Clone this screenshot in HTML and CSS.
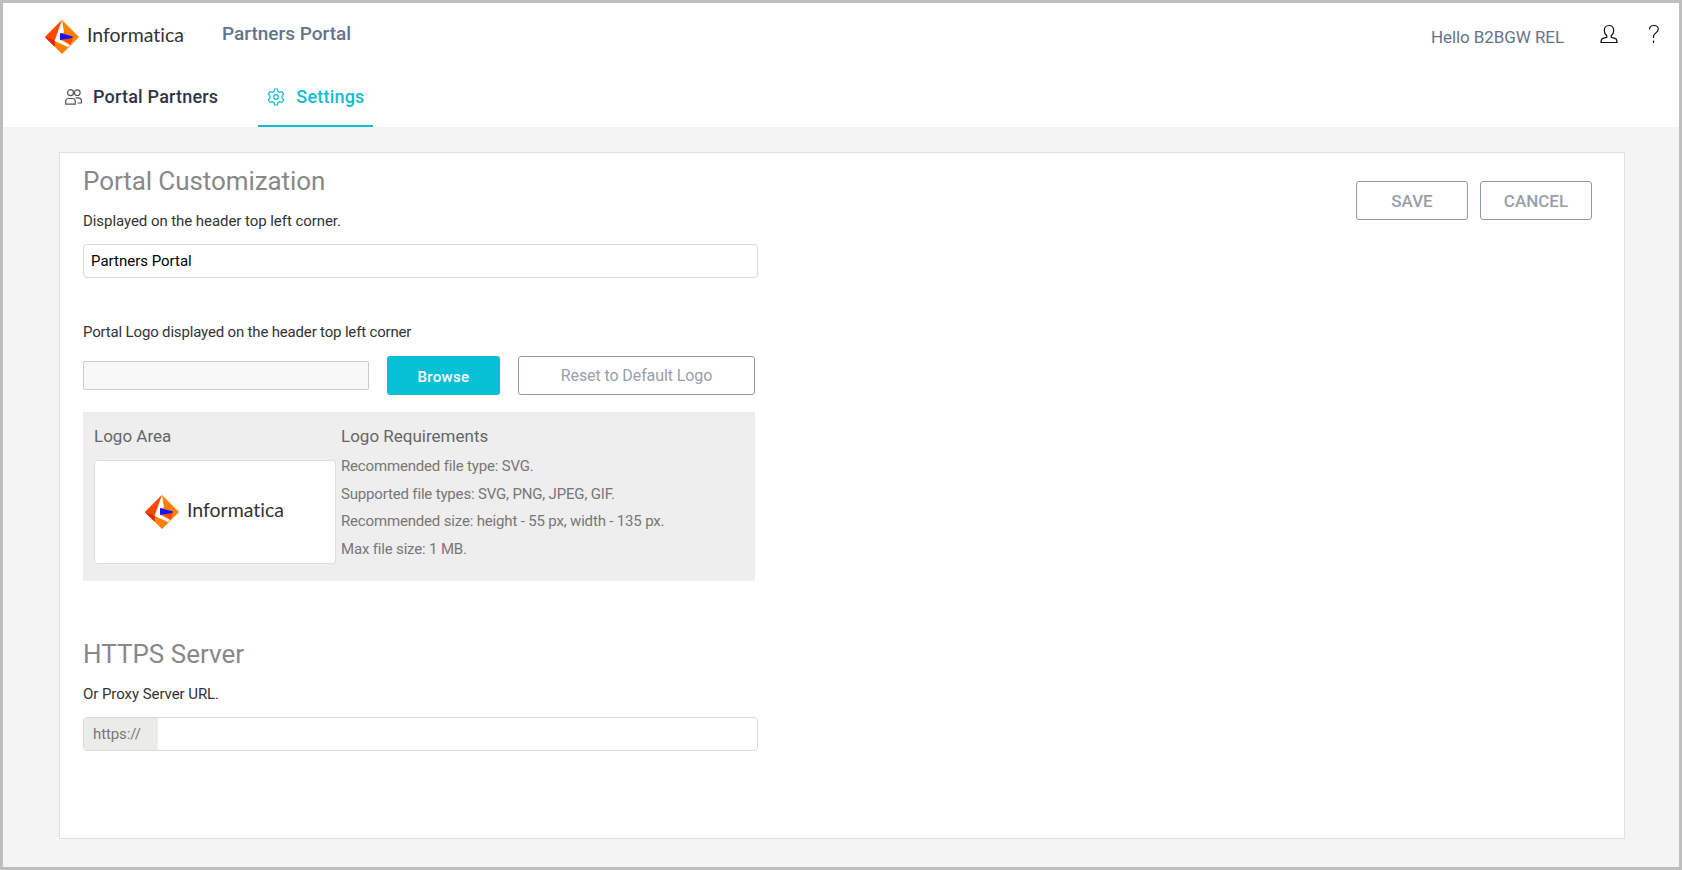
FILE: index.html
```
<!DOCTYPE html>
<html lang="en">
<head>
    <meta charset="UTF-8">
    <title>Partners Portal</title>
    <link rel="stylesheet" href="styles.css">
</head>

<body>
<!-- logo, used in the header and in the logo area -->
<svg class="defs">
    <symbol id="logo" viewBox="0 0 140 36">
        <path fill="#ff7f00" d="M17 0 34 17 17 34 0 17z"/>
        <path fill="#ff4800" d="M16.500 0.500 0 17 9.500 26.500 11 19z"/>
        <path fill="#d92b00" d="M0 17 10 20.500 9.500 26.500z"/>
        <path fill="#fff" d="M17 0 19 12.500 15 13.500 15 19.500 25 25 23 27 9.500 21z"/>
        <path fill="#ff4800" d="M17.500 19.500 28 17.500 25.500 24.500z"/>
        <path fill="#0a14ff" d="M15 13 28 16.500 27 18 15 20z"/>
        <text x="42" y="22" textLength="97" lengthAdjust="spacingAndGlyphs">Informatica</text>
        <circle cx="139.300" cy="13" r=".5" fill="#777"/>
    </symbol>
</svg>
<div class="page">
    <header class="header">
        <div class="top">
            <svg class="logo"><use href="#logo"/></svg>
            <span class="portal-name">Partners Portal</span>
            <span class="hello">Hello B2BGW REL</span>
            <svg class="user" viewBox="0 0 18 20">
                <path d="M9 1.500C5.800 1.500 4.300 3.800 4.300 6.500C4.300 9 5.300 10.500 6.800 11.700V13.300L3 14.300C1.500 14.800 1 16 1 18.500H17C17 16 16.500 14.800 15 14.300L11.200 13.300V11.700C12.700 10.500 13.700 9 13.700 6.500C13.700 3.800 12.200 1.500 9 1.500z"/>
            </svg>
            <svg class="help" viewBox="0 0 12 20">
                <path d="M1.500 5.500C1.500 2.800 3.200 1.500 5.800 1.500C8.500 1.500 10.300 3 10.300 5.300C10.300 8.500 5.500 9.200 5.500 12.500V14M5.500 16.500V19"/>
            </svg>
        </div>
        <nav class="tabs">
            <a class="tab">
                <svg class="icon" viewBox="0 0 18 18">
                    <circle cx="5.500" cy="4.700" r="3"/>
                    <circle cx="12.300" cy="4.700" r="2.800"/>
                    <path d="M.700 16.200V13.500C.700 11.500 2 10.500 4 10.500H7C9 10.500 10.300 11.500 10.300 13.500V16.200zM10.500 9.900H13C15.200 9.900 16.400 11 16.400 13V15H12.500"/>
                </svg>
                <span>Portal Partners</span>
            </a>
            <a class="tab current">
                <svg class="icon" viewBox="0 0 18 18">
                    <circle cx="9" cy="9" r="2.300"/>
                    <path d="M7.600 1H10.400L11 3.300L12.800 4.300L15.100 3.700L16.600 6.100L15 7.900V10.100L16.600 11.900L15.100 14.300L12.800 13.700L11 14.700L10.400 17H7.600L7 14.700L5.200 13.700L2.900 14.300L1.400 11.900L3 10.100V7.900L1.400 6.100L2.900 3.700L5.200 4.300L7 3.300z"/>
                </svg>
                <span>Settings</span>
            </a>
        </nav>
    </header>
    <main class="panel">
        <div class="form">
            <h1>Portal Customization</h1>
            <label class="label">Displayed on the header top left corner.</label>
            <div class="input">Partners Portal</div>
            <label class="label label-logo">Portal Logo displayed on the header top left corner</label>
            <div class="file-row">
                <div class="file-name"></div>
                <button class="btn browse">Browse</button>
                <button class="btn reset">Reset to Default Logo</button>
            </div>
            <div class="logo-box">
                <div class="logo-area">
                    <h2>Logo Area</h2>
                    <div class="preview"><svg class="logo"><use href="#logo"/></svg></div>
                </div>
                <div class="requirements">
                    <h2>Logo Requirements</h2>
                    <p>Recommended file type: SVG.</p>
                    <p>Supported file types: SVG, PNG, JPEG, GIF.</p>
                    <p>Recommended size: height - 55 px, width - 135 px.</p>
                    <p>Max file size: 1 MB.</p>
                </div>
            </div>
            <h1 class="server">HTTPS Server</h1>
            <label class="label">Or Proxy Server URL.</label>
            <div class="input url"><span class="prefix">https://</span></div>
        </div>
        <div class="actions">
            <button class="btn">SAVE</button>
            <button class="btn">CANCEL</button>
        </div>
    </main>
</div>
</body>
</html>
```
FILE: styles.css
```
* {
    box-sizing: border-box;
}
body {
    margin: 0;
    font-family: Roboto, sans-serif;
    font-size: 15px;
    color: #333;
}
h1, h2, p {
    margin: 0;
    font-weight: 400;
}
.defs {
    display: none;
}
.page {
    height: 870px;
    border: 3px solid #bebebe;
    background: #f4f4f4;
}

/* header */
.header {
    height: 124px;
    background: #fff;
}
.top {
    display: flex;
    height: 62px;
    padding: 17px 19px 0 42px;
}
.logo {
    width: 140px;
    height: 36px;
    font-family: Lato, sans-serif;
    font-size: 19px;
    font-variant-ligatures: none;
    fill: #333;
}
.portal-name {
    margin-left: 37px;
    font-size: 19px;
    font-weight: 500;
    line-height: 28px;
    color: #64748b;
}
.hello {
    margin-left: auto;
    font-size: 17px;
    line-height: 34px;
    letter-spacing: -.08px;
    color: #64748b;
}
.user, .help {
    height: 20px;
    margin-top: 4px;
    fill: none;
    stroke: #111;
    stroke-width: 1.2;
}
.user {
    width: 18px;
    margin-left: 36px;
}
.help {
    width: 12px;
    margin-left: 30px;
}
.tabs {
    display: flex;
    gap: 31px;
    padding-left: 52px;
}
.tab {
    display: flex;
    height: 62px;
    padding: 0 9px 0 10px;
    font-size: 18px;
    font-weight: 500;
    line-height: 64px;
    letter-spacing: .2px;
    color: #2f3446;
}
.tab.current {
    padding: 0 8px 0 9px;
    color: #0fbdd2;
    border-bottom: 2px solid #0fbdd2;
}
.icon {
    width: 18px;
    height: 18px;
    margin: 23px 11px 0 0;
    fill: none;
    stroke: #555;
    stroke-width: 1.2;
}
.tab .icon {
    margin-right: 10px;
}
.tab.current .icon {
    margin-right: 11px;
    stroke: #0fbdd2;
}

/* panel */
.panel {
    display: flex;
    justify-content: space-between;
    width: 1566px;
    height: 687px;
    margin: 25px 0 0 56px;
    padding: 8px 32px 0 23px;
    background: #fff;
    border: 1px solid #e1e1e1;
}
.form {
    width: 675px;
}
h1 {
    font-size: 26px;
    line-height: 40px;
    letter-spacing: -.08px;
    color: #888;
}
.label {
    display: block;
    margin: 8px 0 11px;
    line-height: 24px;
    letter-spacing: -.06px;
}
.input {
    height: 34px;
    padding-left: 7px;
    border: 1px solid #dadada;
    border-radius: 4px;
    line-height: 32px;
    color: #000;
}
.label-logo {
    margin: 42px 0 12px;
    letter-spacing: -.17px;
}
.file-row {
    display: flex;
    align-items: center;
    height: 39px;
}
.file-name {
    width: 286px;
    height: 29px;
    background: #f8f8f8;
    border: 1px solid #ccc;
    border-radius: 2px;
}
.btn {
    width: 112px;
    height: 39px;
    padding: 0;
    font-family: inherit;
    font-size: 17px;
    font-weight: 500;
    color: #98a0a7;
    background: #fff;
    border: 1px solid #929ba3;
    border-radius: 3px;
}
.browse {
    width: 113px;
    margin: 0 18px;
    padding-top: 2px;
    font-size: 15px;
    letter-spacing: .3px;
    color: #fff;
    background: #08c0d6;
    border: 0;
}
.reset {
    width: 237px;
    font-size: 16px;
    font-weight: 400;
    letter-spacing: -.1px;
}

/* logo preview and requirements */
.logo-box {
    display: flex;
    gap: 5px;
    width: 672px;
    height: 169px;
    margin-top: 17px;
    padding: 12px 11px;
    background: #eee;
}
h2 {
    font-size: 17px;
    line-height: 24px;
    color: #666;
}
.preview {
    width: 242px;
    height: 104px;
    margin-top: 12px;
    padding: 34px 0 0 50px;
    background: #fff;
    border: 1px solid #ddd;
    border-radius: 3px;
}
.requirements h2 {
    margin-bottom: 5px;
}
.requirements p {
    line-height: 27.6px;
    letter-spacing: -.17px;
    color: #777;
}
.server {
    margin-top: 53px;
    letter-spacing: 0;
}
.url {
    padding-left: 0;
}
.prefix {
    display: block;
    width: 74px;
    height: 32px;
    padding-left: 9px;
    background: #ebece8;
    border-radius: 3px 0 0 3px;
    letter-spacing: -.1px;
    color: #777;
}
.actions {
    display: flex;
    gap: 12px;
    padding-top: 20px;
}
```
